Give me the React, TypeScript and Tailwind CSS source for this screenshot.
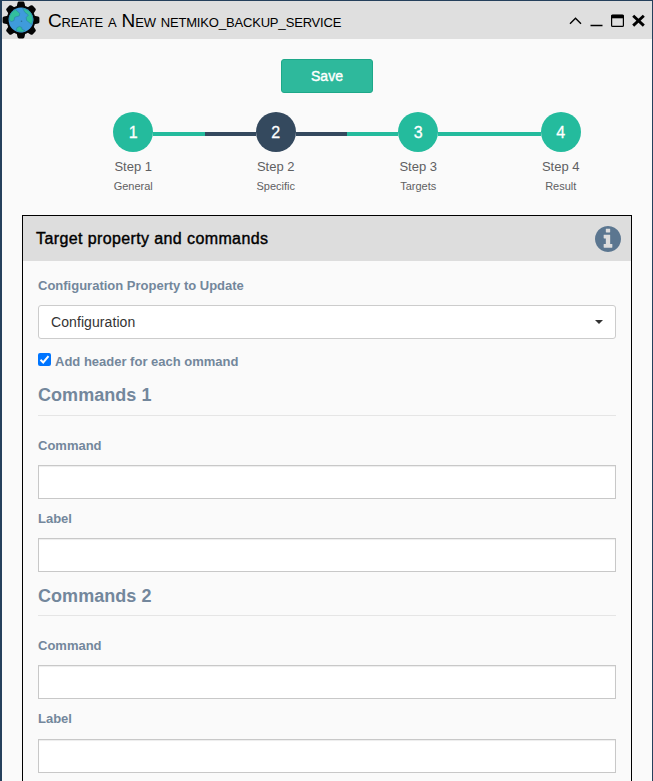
import React from "react";

function GlobeGear() {
  return (
    <svg width="38" height="38" viewBox="0 0 38 38" className="shrink-0">
      <g fill="#050505">
        {[0, 45, 90, 135, 180, 225, 270, 315].map((a) => (
          <path key={a} d="M14.4 7 L15.5 2 Q15.8 .6 17 .6 H21 Q22.2 .6 22.5 2 L23.6 7Z" transform={`rotate(${a} 19 19)`} />
        ))}
        <circle cx="19" cy="19" r="14.4" />
      </g>
      <circle cx="19" cy="19" r="12.4" fill="#3f9bdc" />
      <g fill="#32bf9d" stroke="#2a7fa8" strokeWidth=".6" strokeLinejoin="round">
        <path d="M7.5 15 Q9.5 10 13.5 8.4 L15.2 10 L17.8 12.4 L17.2 15 L14.5 15.6 L12.6 16.4 L12 19.6 L9.2 20.6 L7.2 19 Z" />
        <path d="M20.5 7.2 Q27.5 8.5 30 14 L31 19 L29.5 23.5 L27.2 21.5 L24.6 19.5 L24.2 16.5 L26.4 14 L23 11.5 Z" />
        <path d="M14 29.4 L15 26.6 L17.5 25.4 L20 26.6 L19.8 28.2 L23 29.6 L20.5 31 Q16.5 31.2 14 29.4Z" />
      </g>
      <circle cx="19.5" cy="20.2" r=".8" fill="#2a6f9c" />
    </svg>
  );
}

function WindowControls() {
  return (
    <svg width="80" height="20" viewBox="0 0 80 20" fill="none" stroke="#000">
      <path d="M2 13.8 L7.5 8.2 L13 13.8" strokeWidth="1.4" />
      <path d="M22.5 15.5 H34.5" strokeWidth="1.5" />
      <rect x="43.6" y="5.1" width="11.8" height="11.3" rx="1" strokeWidth="1.2" />
      <path d="M43.4 6.6 H55.6" strokeWidth="3.4" />
      <path d="M65.2 5.8 L75.8 15.6 M75.8 5.8 L65.2 15.6" strokeWidth="2.9" />
    </svg>
  );
}

function InfoIcon() {
  return (
    <svg width="26" height="26" viewBox="128 128 1536 1536" fill="#5b7690">
      <path d="M1152 1376v-160q0-14-9-23t-23-9h-96v-512q0-14-9-23t-23-9h-320q-14 0-23 9t-9 23v160q0 14 9 23t23 9h96v320h-96q-14 0-23 9t-9 23v160q0 14 9 23t23 9h448q14 0 23-9t9-23zM1024 480v-160q0-14-9-23t-23-9h-192q-14 0-23 9t-9 23v160q0 14 9 23t23 9h192q14 0 23-9t9-23zM1664 896q0 209-103 385.5t-279.5 279.5-385.5 103-385.5-103-279.5-279.5-103-385.5 103-385.5 279.5-279.5 385.5-103 385.5 103 279.5 279.5 103 385.5z" />
    </svg>
  );
}

const steps = [
  { n: 1, label: "General", left: "bg-transparent", right: "bg-[#24bb9d]" },
  { n: 2, label: "Specific", left: "bg-[#34495e]", right: "bg-[#34495e]" },
  { n: 3, label: "Targets", left: "bg-[#24bb9d]", right: "bg-[#24bb9d]" },
  { n: 4, label: "Result", left: "bg-[#24bb9d]", right: "bg-transparent" },
];

function Wizard() {
  return (
    <div className="mt-[19px] ml-[60px] grid w-[570px] grid-cols-4">
      {steps.map((s) => (
        <div key={s.n} className="flex flex-col items-center text-[#5f6062]">
          <div className="flex w-full items-center">
            <div className={`mt-1 h-1 flex-1 ${s.left}`} />
            <div className={`flex size-10 items-center justify-center rounded-full pt-px text-base text-white [-webkit-text-stroke:0.3px_white] ${s.n === 2 ? "bg-[#34495e]" : "bg-[#24bb9d]"}`}>
              {s.n}
            </div>
            <div className={`mt-1 h-1 flex-1 ${s.right}`} />
          </div>
          <span className="mt-[5px] text-[13px] leading-5">Step {s.n}</span>
          <span className="text-[11px] leading-[18px]">{s.label}</span>
        </div>
      ))}
    </div>
  );
}

function Field({ label, roomy }: { label: string; roomy?: boolean }) {
  return (
    <label className="block">
      <span className="block h-5 text-[13px] leading-5 font-bold">{label}</span>
      <input className={`block h-[34px] w-full border border-[#c8c8c8] bg-white px-3 shadow-[inset_0_1px_1px_rgba(0,0,0,0.075)] outline-none ${roomy ? "mt-[10px]" : "mt-[9px]"}`} />
    </label>
  );
}

function CommandGroup({ n, last }: { n: number; last?: boolean }) {
  return (
    <section>
      <h2 className={`h-[30px] border-b border-[#e5e5e5] text-[18px] font-bold tracking-[0.05px] ${last ? "leading-[20px]" : "leading-[18px]"}`}>Commands {n}</h2>
      <div className="mt-5">
        <Field label="Command" />
      </div>
      <div className="mt-[10px]">
        <Field label="Label" roomy={last} />
      </div>
    </section>
  );
}

export default function App() {
  return (
    <div className="h-[781px] w-[653px] overflow-hidden border-t border-r border-l-2 border-[#25405c] bg-[#fafafa] font-['Liberation_Sans',Arial,sans-serif]">
      <header className="flex h-[38px] items-center bg-[#dfdfdf]">
        <GlobeGear />
        <h1 className="ml-[8px] flex-1 pt-[4px] text-[19px] leading-6 tracking-[-0.19px] whitespace-nowrap text-black [font-variant:small-caps]">
          Create a New netmiko<span className="text-[13.5px]">_</span>backup<span className="text-[13.5px]">_</span>service
        </h1>
        <div className="mr-[4px]">
          <WindowControls />
        </div>
      </header>
      <div className="mt-5 flex justify-center">
        <button className="h-[34px] w-[92px] rounded-[3px] border border-[#1ea889] bg-[#2eb99c] text-sm text-white [-webkit-text-stroke:0.4px_white]">Save</button>
      </div>
      <Wizard />
      <section className="mt-5 mr-5 ml-5 h-[700px] border border-black">
        <div className="flex h-[45px] items-center justify-between bg-[#dddddd] pr-[10px] pl-[13px]">
          <h2 className="text-base tracking-[0.39px] text-black [-webkit-text-stroke:0.4px_black]">Target property and commands</h2>
          <InfoIcon />
        </div>
        <div className="px-[15px] text-[#73879c]">
          <div className="pt-[15px] text-[13px] leading-5 font-bold">Configuration Property to Update</div>
          <button className="mt-[9px] flex h-[34px] w-full items-center justify-between rounded-[3px] border border-[#ccc] bg-white pr-3 pl-3 text-sm tracking-[0.08px] text-[#333]">
            Configuration
            <span className="border-x-4 border-t-4 border-x-transparent border-t-[#333]" />
          </button>
          <label className="mt-[12px] flex h-5 items-center text-[13px] font-bold">
            <span className="mt-[-3px] mr-1 flex size-[13px] items-center justify-center rounded-[2px] bg-[#0075ff]">
              <svg width="11" height="11" viewBox="0 0 11 11" fill="none" stroke="white" strokeWidth="2">
                <path d="M1.5 5.8 L4.2 8.5 L9.5 2.2" />
              </svg>
            </span>
            <span className="pt-[2px]">Add header for each ommand</span>
          </label>
          <div className="mt-[15px] flex flex-col gap-[14px]">
            <CommandGroup n={1} />
            <CommandGroup n={2} last />
          </div>
        </div>
      </section>
    </div>
  );
}
